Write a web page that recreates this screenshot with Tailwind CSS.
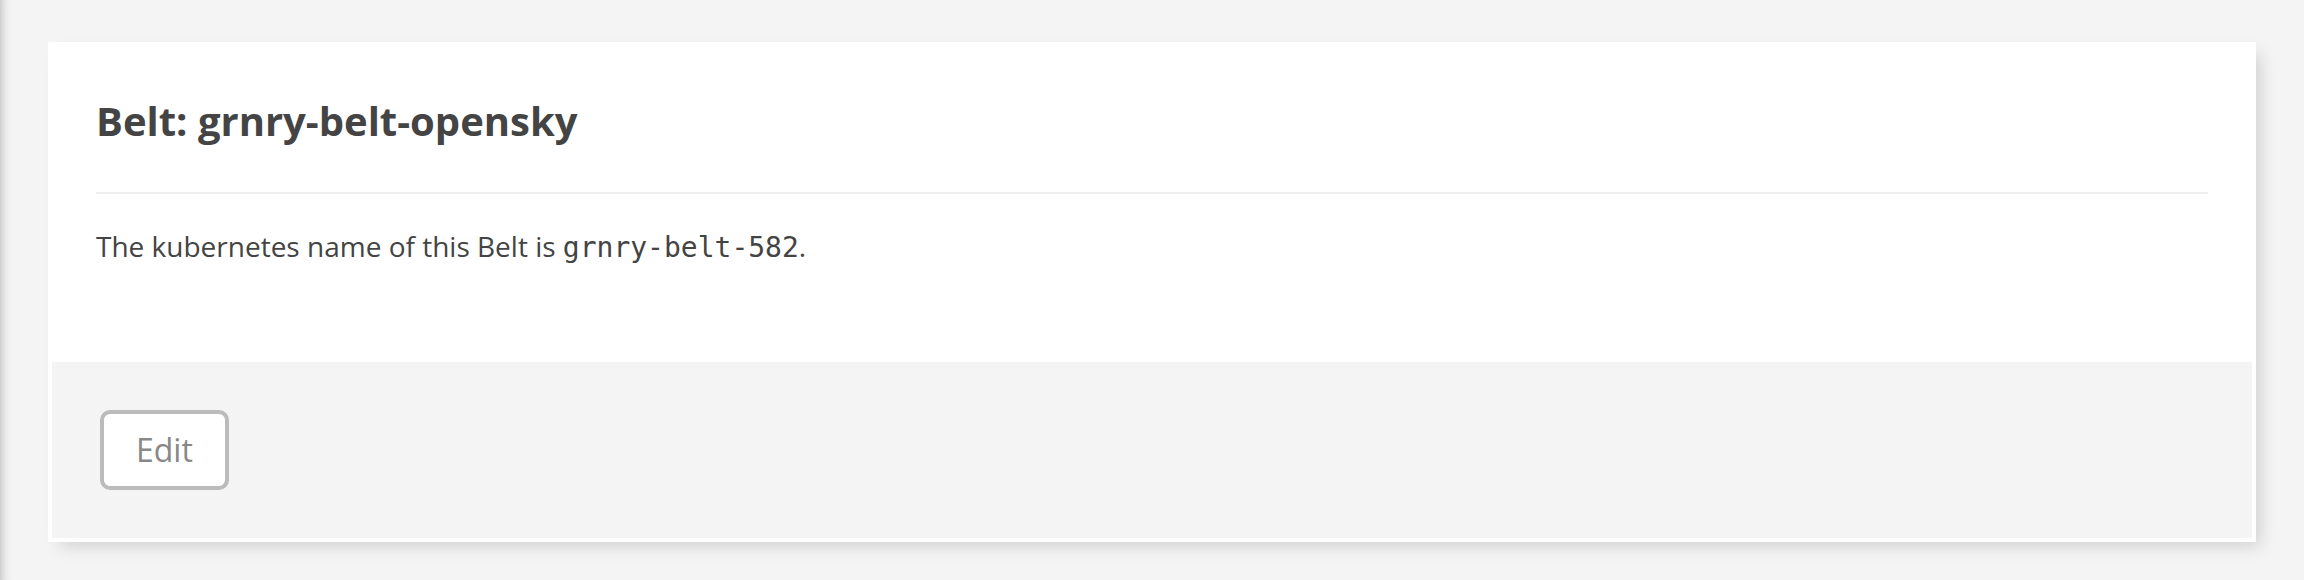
<!DOCTYPE html>
<html lang="en">
<head>
<meta charset="utf-8">
<meta name="viewport" content="width=device-width, initial-scale=1">
<title>Belt: grnry-belt-opensky</title>
<script src="https://cdn.jsdelivr.net/npm/@tailwindcss/browser@4"></script>
</head>
<body class="min-h-screen bg-[#f4f4f4] px-12 pt-[42px] pb-[38px] font-['Open_Sans',sans-serif] text-[#444444] shadow-[inset_12px_0_12px_-12px_rgba(0,0,0,0.3)]">
  <main class="border-4 border-white bg-white shadow-[8px_8px_16px_-4px_rgba(0,0,0,0.15)]">
    <section class="px-11 pt-11 pb-24">
      <h1 class="border-b-2 border-[#eeeeee] pb-10 text-[40px] leading-[62px] font-bold">Belt: grnry-belt-opensky</h1>
      <p class="pt-8 text-[28px] leading-[40px]">The kubernetes name of this Belt is <code class="font-['DejaVu_Sans_Mono',monospace] text-[28px] leading-none">grnry-belt-582</code>.</p>
    </section>
    <footer class="bg-[#f4f4f4] p-12">
      <button type="button" class="block rounded-[10px] border-4 border-[#bbbbbb] bg-white px-8 py-4 text-[32px] leading-[40px] text-[#888888]">Edit</button>
    </footer>
  </main>
</body>
</html>
